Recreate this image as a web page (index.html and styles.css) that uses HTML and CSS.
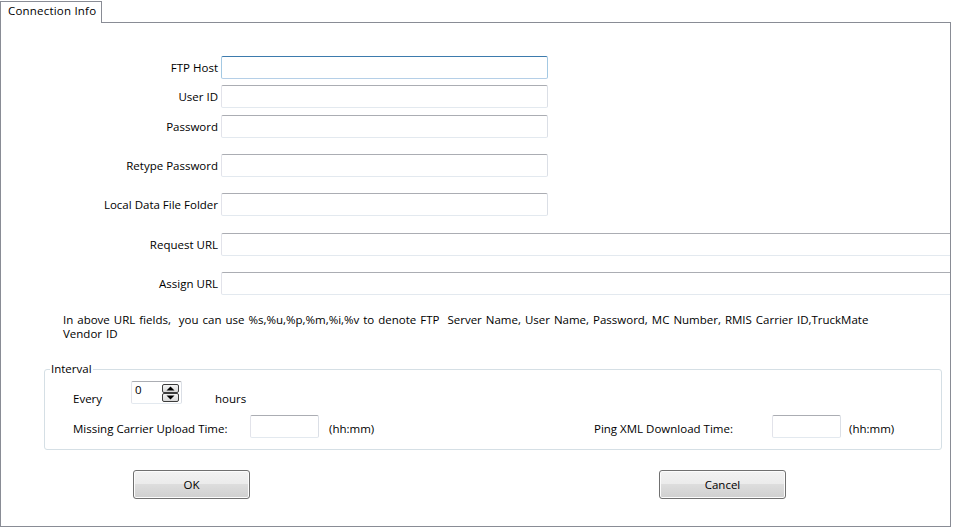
FILE: index.html
```html
<!DOCTYPE html>
<html>
<head>
<meta charset="utf-8">
<link rel="stylesheet" href="styles.css">
</head>
<body>
<div class="tabstrip">
  <div class="tab">Connection Info</div>
  <div class="tabfill"></div>
</div>
<div class="panel">
  <div class="row"><div class="lbl">FTP Host</div><div class="tb focus"></div></div>
  <div class="row g6"><div class="lbl">User ID</div><div class="tb"></div></div>
  <div class="row g7"><div class="lbl">Password</div><div class="tb"></div></div>
  <div class="row g16"><div class="lbl">Retype Password</div><div class="tb"></div></div>
  <div class="row g16"><div class="lbl">Local Data File Folder</div><div class="tb"></div></div>
  <div class="row g17"><div class="lbl">Request URL</div><div class="tb wide"></div></div>
  <div class="row g16"><div class="lbl">Assign URL</div><div class="tb wide"></div></div>
  <p class="note">In above URL fields,&nbsp; you can use %s,%u,%p,%m,%i,%v to denote FTP&nbsp; Server Name, User Name, Password, MC Number, RMIS Carrier ID,TruckMate<br>Vendor ID</p>
  <fieldset class="group">
    <legend>Interval</legend>
    <div class="irow1">
      <div class="every">Every</div>
      <div class="spin">
        <span class="spin-val">0</span>
        <div class="spin-btns">
          <span class="sb"><svg width="15" height="7" viewBox="0 0 15 7"><path d="M3.5 5.5 L7.5 1.5 L11.5 5.5 Z" fill="#000"/></svg></span>
          <span class="sb"><svg width="15" height="7" viewBox="0 0 15 7"><path d="M3.5 1.5 L7.5 5.5 L11.5 1.5 Z" fill="#000"/></svg></span>
        </div>
      </div>
      <div class="hours">hours</div>
    </div>
    <div class="irow2">
      <div class="tgroup left">
        <div class="tlbl l1">Missing Carrier Upload Time:</div>
        <div class="tb time t1"></div>
        <div class="unit u1">(hh:mm)</div>
      </div>
      <div class="tgroup">
        <div class="tlbl l2">Ping XML Download Time:</div>
        <div class="tb time t2"></div>
        <div class="unit u2">(hh:mm)</div>
      </div>
    </div>
  </fieldset>
  <div class="buttons">
    <div class="btn ok">OK</div>
    <div class="btn cancel">Cancel</div>
  </div>
</div>
</body>
</html>
```
FILE: styles.css
```css
* { box-sizing: border-box; }
html, body { margin: 0; padding: 0; background: #fff; }
body {
  font-family: "Open Sans", "Noto Sans", "Liberation Sans", sans-serif;
  font-size: 11.5px;
  color: #000;
  width: 953px;
  height: 528px;
  overflow: hidden;
}
.tabstrip { display: flex; width: 951px; height: 23px; }
.tab {
  margin-top: 1px;
  width: 102px;
  height: 22px;
  border: 1px solid #898c95;
  border-bottom: none;
  background: #fff;
  padding-left: 7px;
  line-height: 17px;
  white-space: nowrap;
  letter-spacing: 0.2px;
}
.tabfill { flex: 1; border-bottom: 1px solid #898c95; }
.panel {
  width: 951px;
  height: 504px;
  border: 1px solid #898c95;
  border-top: none;
  overflow: hidden;
  padding-top: 33px;
}
.row { display: flex; align-items: center; height: 23px; }
.g6 { margin-top: 6px; }
.g7 { margin-top: 7px; }
.g16 { margin-top: 16px; }
.g17 { margin-top: 17px; }
.lbl { width: 220px; text-align: right; padding-right: 3px; line-height: 14px; white-space: nowrap; }
.tb {
  height: 23px;
  width: 327px;
  border: 1px solid;
  border-color: #abadb3 #dbdfe6 #e3e9ef #e2e3ea;
  border-radius: 2px;
  background: #fff;
}
.tb.focus { border-color: #3d7bad #a4c9e3 #b5cfe7 #a4c9e3; }
.tb.wide { flex: 1; width: auto; margin-right: -6px; }
.note {
  margin: 18px 0 0 0;
  padding-left: 62px;
  line-height: 14px;
  white-space: nowrap;
  word-spacing: 1px;
}
.group {
  margin: 21px 8px 0 43px;
  padding: 0 0 11px 28px;
  border: 1px solid #d5dfe5;
  border-radius: 3px;
  min-width: 0;
}
.group legend { margin-left: -23px; padding: 0 1px; line-height: 14px; }
.irow1 { display: flex; align-items: flex-start; margin-top: 5px; height: 23px; }
.every { width: 58px; line-height: 14px; margin-top: 11px; }
.spin {
  display: flex;
  width: 51px;
  height: 23px;
  border: 1px solid;
  border-color: #abadb3 #dbdfe6 #e3e9ef #e2e3ea;
  border-radius: 2px;
}
.spin-val { padding: 1px 0 0 3px; line-height: 14px; }
.spin-btns { margin: 2px 2px 0 auto; display: flex; flex-direction: column; }
.sb {
  display: block;
  width: 17px;
  height: 9px;
  border: 1px solid #3c3c3c;
  border-radius: 2px;
  background: linear-gradient(#f4f4f4, #d8d8d8);
}
.sb svg { display: block; }
.hours { margin-left: 33px; margin-top: 11px; line-height: 14px; }
.irow2 { display: flex; margin-top: 11px; height: 23px; }
.tgroup { display: flex; align-items: flex-start; }
.tgroup.left { width: 521px; }
.tlbl { line-height: 14px; margin-top: 7px; white-space: nowrap; }
.l1 { width: 177px; }
.l2 { width: 178px; }
.tb.time { width: 69px; }
.t2 { width: 70px; }
.unit { line-height: 14px; margin-top: 7px; }
.u1 { margin-left: 10px; }
.u2 { margin-left: 8px; }
.buttons { display: flex; padding-left: 132px; margin-top: 20px; }
.btn {
  height: 29px;
  border: 1px solid #707070;
  border-radius: 3px;
  background: linear-gradient(#f2f2f2 0%, #ebebeb 50%, #dddddd 50%, #cfcfcf 100%);
  box-shadow: inset 0 0 0 1px #fcfcfc;
  display: flex;
  align-items: center;
  justify-content: center;
  line-height: 14px;
}
.ok { width: 117px; }
.cancel { width: 127px; margin-left: 409px; }
```
